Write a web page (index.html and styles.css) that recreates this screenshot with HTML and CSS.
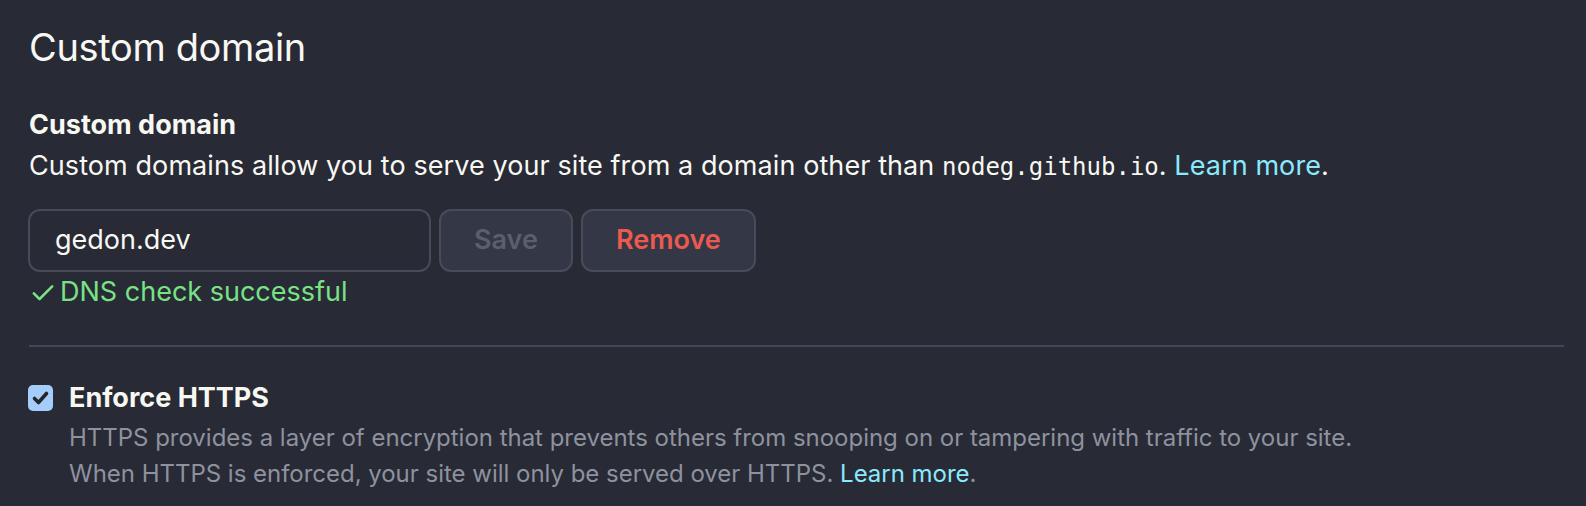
FILE: index.html
```html
<!DOCTYPE html>
<html lang="en">
<head>
<meta charset="utf-8">
<title>Custom domain</title>
<link rel="stylesheet" href="styles.css">
</head>
<body>
<main class="page">
  <h2 class="title">Custom domain</h2>

  <section class="field">
    <h3 class="label">Custom domain</h3>
    <p class="desc">Custom domains allow you to serve your site from a domain other than <code class="mono">nodeg.github.io</code>. <a class="link" href="#">Learn more</a>.</p>
    <div class="form-row">
      <input class="input" type="text" value="gedon.dev">
      <button class="btn btn-save" type="button" disabled>Save</button>
      <button class="btn btn-remove" type="button">Remove</button>
    </div>
    <p class="note">
      <svg class="note-icon" viewBox="0 0 16 16" aria-hidden="true"><path d="M13.78 4.22a.75.75 0 0 1 0 1.06l-7.25 7.25a.75.75 0 0 1-1.06 0L2.22 9.28a.751.751 0 0 1 .018-1.042.751.751 0 0 1 1.042-.018L6 10.94l6.72-6.72a.75.75 0 0 1 1.06 0Z"/></svg>
      <span>DNS check successful</span>
    </p>
  </section>

  <hr class="sep">

  <section class="check-row">
    <span class="checkbox" aria-hidden="true">
      <svg viewBox="0 0 25 26"><path d="M6.5 13.5 L10.5 17.5 L18.5 8.5" fill="none" stroke="#262628" stroke-width="3.6" stroke-linecap="round" stroke-linejoin="round"/></svg>
    </span>
    <div class="check-body">
      <div class="check-label">Enforce HTTPS</div>
      <p class="check-desc">HTTPS provides a layer of encryption that prevents others from snooping on or tampering with traffic to your site.<br>When HTTPS is enforced, your site will only be served over HTTPS. <a class="link" href="#">Learn more</a>.</p>
    </div>
  </section>
</main>
</body>
</html>
```
FILE: styles.css
```css
* { box-sizing: border-box; }

html, body {
  margin: 0;
  background: #282a36;
}

body {
  font-family: Inter, "Noto Sans", "Liberation Sans", sans-serif;
  color: #f8f8f2;
}

.page {
  padding: 22px 22px 0 29px;
}

.title {
  margin: 0;
  font-size: 38px;
  line-height: 50px;
  font-weight: 400;
  letter-spacing: -0.35px;
}

.field {
  margin-top: 32px;
}

.label {
  margin: 0;
  font-size: 27px;
  line-height: 41px;
  font-weight: 700;
}

.desc {
  margin: 0;
  font-size: 27px;
  line-height: 41px;
  letter-spacing: 0.08px;
}

.mono {
  font-family: "DejaVu Sans Mono", "Liberation Mono", monospace;
  font-size: 24px;
  letter-spacing: 0;
}

.link {
  color: #8be9fd;
  text-decoration: none;
}

.form-row {
  margin-top: 21px;
  display: flex;
  gap: 8px;
  margin-left: -1px;
}

.input {
  width: 403px;
  height: 63px;
  border: 2px solid #474a59;
  border-radius: 12px;
  background: #282a36;
  color: #f8f8f2;
  font-family: inherit;
  font-size: 27px;
  padding: 0 0 2px 25px;
  outline: none;
}

.btn {
  height: 63px;
  border: 2px solid #484b5a;
  border-radius: 12px;
  background: #343746;
  font-family: inherit;
  font-size: 27px;
  font-weight: 600;
  padding: 0 33px 2px;
}

.btn-save {
  color: #5b5f6d;
}

.btn-remove {
  color: #ec5a4f;
}

.note {
  margin: 5px 0 0;
  display: flex;
  align-items: center;
  gap: 3px;
  font-size: 27px;
  line-height: 30px;
  color: #78e285;
}

.note-icon {
  width: 28px;
  height: 28px;
  fill: #78e285;
}

.sep {
  margin: 38px 0 0;
  border: 0;
  height: 2px;
  background: #44475a;
}

.check-row {
  margin-top: 33px;
  display: flex;
  gap: 16px;
  margin-left: -1px;
}

.checkbox {
  flex: none;
  width: 25px;
  height: 26px;
  margin-top: 5px;
  border-radius: 5px;
  background: #a4cdfc;
}

.checkbox svg {
  display: block;
  width: 25px;
  height: 26px;
}

.check-label {
  font-size: 27px;
  line-height: 36px;
  font-weight: 700;
}

.check-desc {
  margin: 4px 0 0;
  font-size: 24px;
  line-height: 36px;
  letter-spacing: -0.02px;
  color: #8e929e;
}
```
